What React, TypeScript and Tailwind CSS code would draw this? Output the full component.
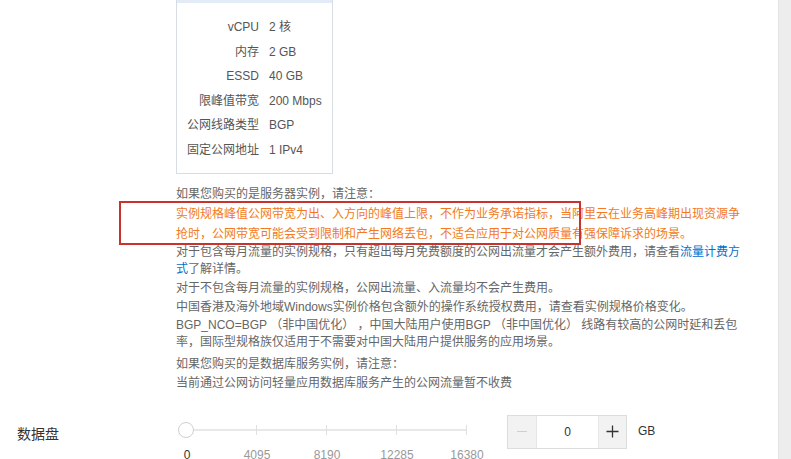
import React from "react";

const specs = [
  { k: "vCPU", v: "2 核" },
  { k: "内存", v: "2 GB" },
  { k: "ESSD", v: "40 GB" },
  { k: "限峰值带宽", v: "200 Mbps" },
  { k: "公网线路类型", v: "BGP" },
  { k: "固定公网地址", v: "1 IPv4" },
];

const ticks = [
  { at: 0, label: "0" },
  { at: 70, label: "4095" },
  { at: 140, label: "8190" },
  { at: 210, label: "12285" },
  { at: 280, label: "16380" },
];

export default function App() {
  return (
    <div
      className="relative flex w-[791px] h-[459px] overflow-hidden bg-white text-[12px] text-[#666]"
      style={{ fontFamily: '"Liberation Sans", Arial, "Noto Sans CJK SC", sans-serif' }}
    >
      <div className="flex-1 flex flex-col">
        {/* spec card + notes */}
        <div className="flex">
          <div className="w-[176px] shrink-0" />
          <div className="relative w-[570px]">
            <div className="w-[157px] border border-t-0 border-[#d8dde3] bg-white">
              <div className="h-[3px] bg-[#e2ebf6]" />
              <div className="pt-[12px] pb-[10px]">
                {specs.map((s) => (
                  <div key={s.k} className="flex leading-[24.6px]">
                    <span className="w-[82px] text-right text-[#555]">{s.k}</span>
                    <span className="ml-[10px] text-[#555]">{s.v}</span>
                  </div>
                ))}
              </div>
            </div>

            <div className="mt-[12px] leading-[17px]">
              <p>如果您购买的是服务器实例，请注意：</p>
              <p className="mt-[1px] leading-[20px] text-[#f27a22]">
                实例规格峰值公网带宽为出、入方向的峰值上限，不作为业务承诺指标，当阿里云在业务高峰期出现资源争抢时，公网带宽可能会受到限制和产生网络丢包，不适合应用于对公网质量有强保障诉求的场景。
              </p>
              <p>
                对于包含每月流量的实例规格，只有超出每月免费额度的公网出流量才会产生额外费用，请查看
                <span className="text-[#0070cc]">流量计费方式</span>了解详情。
              </p>
              <p className="mt-[2px]">对于不包含每月流量的实例规格，公网出流量、入流量均不会产生费用。</p>
              <p className="mt-[2px]">中国香港及海外地域Windows实例价格包含额外的操作系统授权费用，请查看实例规格价格变化。</p>
              <p className="mt-[1px]">
                BGP_NCO=BGP （非中国优化） ，中国大陆用户使用BGP （非中国优化） 线路有较高的公网时延和丢包
                <br />
                率，国际型规格族仅适用于不需要对中国大陆用户提供服务的应用场景。
              </p>
              <p className="mt-[5px]">如果您购买的是数据库服务实例，请注意：</p>
              <p className="mt-[2px]">当前通过公网访问轻量应用数据库服务产生的公网流量暂不收费</p>
            </div>

            {/* annotation box */}
            <div className="absolute left-[-57px] top-[201px] w-[462px] h-[44px] border-2 border-[#c8332e]" />
          </div>
        </div>

        {/* data disk row */}
        <div className="flex mt-[23px] h-[46px]">
          <div className="w-[176px] shrink-0 pl-[17px] pt-[10px] text-[14px] leading-[18px] text-[#333]">数据盘</div>
          <div className="relative ml-[10px] w-[280px] h-[46px]">
            <div className="absolute left-0 right-0 top-[14px] h-[2px] bg-[#e8e8e8]" />
            {ticks.slice(1).map((t) => (
              <div
                key={t.label}
                className="absolute top-[10px] w-[1px] h-[10px] bg-[#e0e0e0]"
                style={{ left: t.at }}
              />
            ))}
            <div className="absolute left-[-8px] top-[7px] w-[16px] h-[16px] rounded-full border border-[#cfcfcf] bg-white" />
            {ticks.map((t, i) => (
              <span
                key={t.label}
                className={`absolute top-[33px] -translate-x-1/2 leading-[14px] ${i === 0 ? "text-[#333]" : "text-[#999]"}`}
                style={{ left: t.at + 1 }}
              >
                {t.label}
              </span>
            ))}
          </div>
          <div className="ml-[41px] flex h-[34px] w-[120px] border border-[#dcdcdc]">
            <div className="w-[29px] flex items-center justify-center bg-[#f2f2f2] border-r border-[#e6e6e6]">
              <span className="block w-[10px] h-[1px] bg-[#cfcfcf]" />
            </div>
            <div className="flex-1 flex items-center justify-center text-[12px] text-[#333]">0</div>
            <div className="w-[28px] flex items-center justify-center bg-[#f2f2f2] border-l border-[#e6e6e6]">
              <svg width="13" height="13" viewBox="0 0 13 13">
                <path d="M6.5 0.5v12M0.5 6.5h12" stroke="#333" strokeWidth="1.3" />
              </svg>
            </div>
          </div>
          <div className="ml-[11px] pt-[9px] leading-[14px] text-[12px] text-[#333]">GB</div>
        </div>
      </div>

      {/* scrollbar strip */}
      <div className="w-[13px] h-full bg-[#ededed] border-l border-[#e4e4e4]" />
    </div>
  );
}
